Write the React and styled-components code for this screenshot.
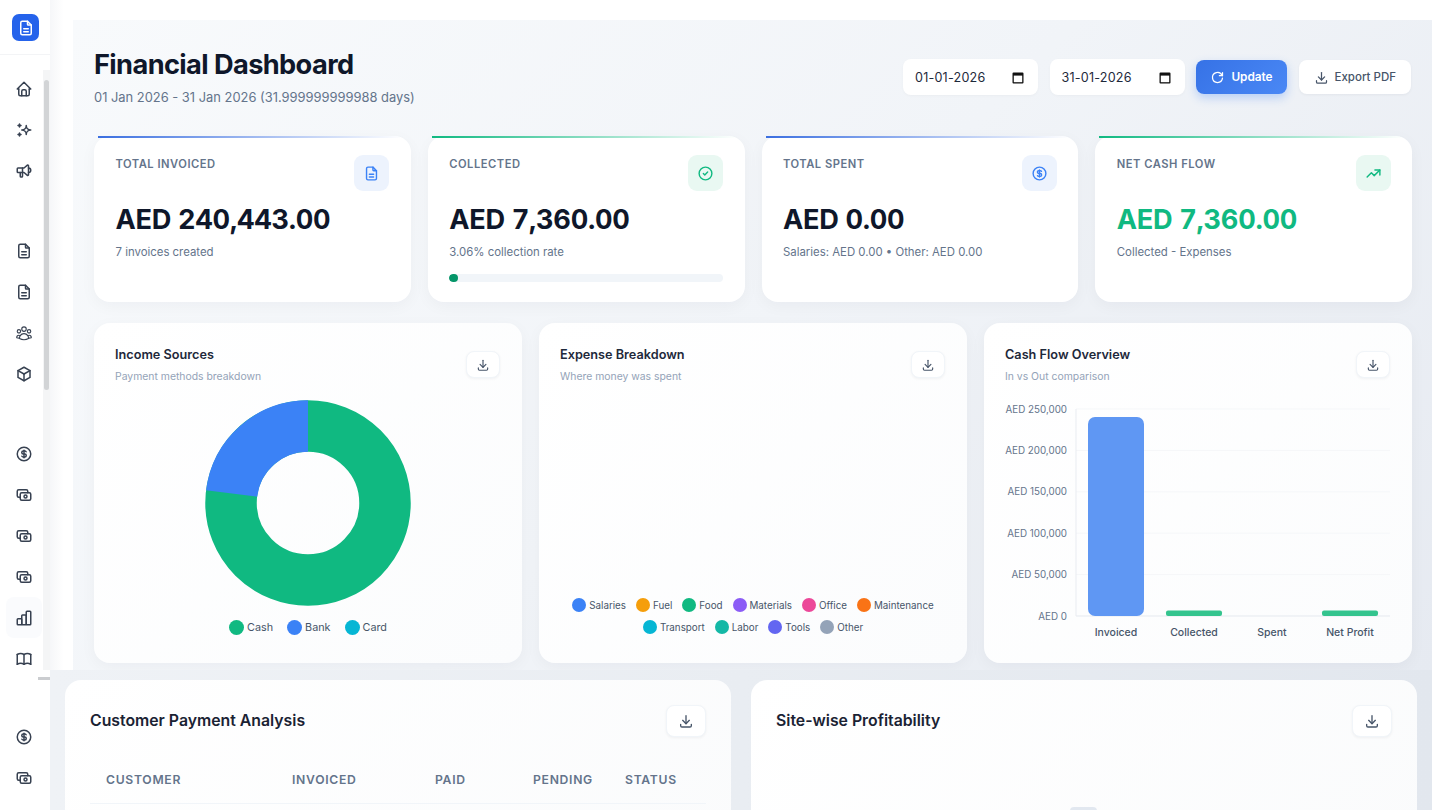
import React from 'react'
import styled, { createGlobalStyle } from 'styled-components'
import {
  TbHome,
  TbSparkles,
  TbSpeakerphone,
  TbFileDescription,
  TbBox,
  TbCoin,
  TbCash,
  TbBook,
  TbDownload,
  TbReload,
  TbCircleCheck,
  TbTrendingUp,
} from 'react-icons/tb'
import { HiOutlineUserGroup } from 'react-icons/hi2'

const GlobalStyle = createGlobalStyle`
  * { box-sizing: border-box; }
  html, body { margin: 0; height: 810px; overflow: hidden; background: #fff; }
  body { font-family: Inter, "Liberation Sans", sans-serif; color: #0f172a; }
`

const Page = styled.div`
  display: flex;
  width: 1440px;
  height: 810px;
`

const Sidebar = styled.aside`
  position: relative;
  width: 50px;
  flex: none;
  height: 810px;
  overflow: hidden;
  background: #fff;
`

const Brand = styled.div`
  height: 55px;
  padding: 14px 0 0 12px;
  border-bottom: 1px solid #f3f4f6;
`

const Logo = styled.div`
  width: 27px;
  height: 27px;
  border-radius: 7px;
  background: #2563eb;
  color: #fff;
  display: flex;
  align-items: center;
  justify-content: center;
`

const NavGroup = styled.div`
  display: flex;
  flex-direction: column;
  padding-top: ${(p) => p.$top}px;
`

const NavItem = styled.div`
  width: 36px;
  height: 41px;
  margin-left: 6px;
  display: flex;
  align-items: center;
  justify-content: center;
  color: #374151;
  border-radius: 8px;
  background: ${(p) => (p.$active ? '#fafbfd' : 'transparent')};
  svg {
    transform: ${(p) => (p.$flip ? 'scaleX(-1)' : 'none')};
  }
`

const ScrollTrack = styled.div`
  position: absolute;
  top: 70px;
  right: 0;
  width: 7px;
  height: 600px;
  background: #f4f5f6;
`

const ScrollThumb = styled.div`
  width: 5px;
  height: 310px;
  margin: 10px 0 0 1px;
  border-radius: 3px;
  background: #d2d4d6;
`

const ScrollEnd = styled.div`
  position: absolute;
  top: 677px;
  right: 0;
  width: 12px;
  height: 3px;
  background: #cbcdd0;
`

const Main = styled.main`
  flex: 1;
  display: flex;
  flex-direction: column;
  min-width: 0;
`

const TopArea = styled.div`
  padding: 20px 8px 0 23px;
  background: linear-gradient(90deg, #f6f7f9 0, #ffffff 60%, #ffffff 100%);
  background-size: 23px 100%;
  background-repeat: no-repeat;
`

const Panel = styled.section`
  height: 650px;
  padding: 0 20px 0 21px;
  background: linear-gradient(135deg, #f8fafc 0%, #f1f4f8 50%, #e6eaf1 100%);
`

const Header = styled.header`
  height: 116px;
  padding-top: 28px;
  display: flex;
  justify-content: space-between;
`

const Title = styled.h1`
  margin: 0;
  font-size: 27.2px;
  line-height: 34px;
  font-weight: 700;
  letter-spacing: -0.6px;
  color: #0f172a;
`

const Subtitle = styled.p`
  margin: 7px 0 0;
  font-size: 12.9px;
  line-height: 18px;
  color: #64748b;
`

const Actions = styled.div`
  display: flex;
  align-items: flex-start;
  gap: 11.5px;
  padding: 11px 1px 0 0;
`

const DateField = styled.div`
  width: 135px;
  height: 36px;
  padding: 0 14px 0 12px;
  display: flex;
  align-items: center;
  justify-content: space-between;
  background: #fff;
  border-radius: 8px;
  font-size: 12.6px;
  letter-spacing: 0.2px;
  color: #1e293b;
  box-shadow: 0 1px 3px rgba(15, 23, 42, 0.03);
`

const ActionButton = styled.button`
  height: 34px;
  margin-top: 1px;
  padding: 0;
  border: 0;
  border-radius: 8px;
  display: flex;
  align-items: center;
  justify-content: center;
  gap: 6px;
  width: ${(p) => p.$width}px;
  font-family: inherit;
  font-size: ${(p) => (p.$primary ? 11.8 : 11.5)}px;
  font-weight: ${(p) => (p.$primary ? 600 : 500)};
  color: ${(p) => (p.$primary ? '#fff' : '#475569')};
  background: ${(p) => (p.$primary ? 'linear-gradient(135deg, #3672e6, #4a88f5)' : '#fff')};
  box-shadow: ${(p) => (p.$primary ? '0 4px 10px rgba(59, 130, 246, 0.3)' : '0 1px 3px rgba(15, 23, 42, 0.05)')};
`

const KpiRow = styled.div`
  display: grid;
  grid-template-columns: repeat(4, 1fr);
  gap: 17px;
`

const KpiCard = styled.div`
  position: relative;
  height: 166px;
  padding: 19px 21.5px;
  border-radius: 16px;
  background: #fff;
  box-shadow: 0 4px 16px rgba(15, 23, 42, 0.04);
  &::before {
    content: '';
    position: absolute;
    top: 0;
    left: 4px;
    right: 8px;
    height: 2px;
    background: linear-gradient(90deg, ${(p) => p.$accent}, transparent);
  }
`

const KpiTop = styled.div`
  display: flex;
  justify-content: space-between;
  align-items: flex-start;
  height: 36px;
`

const KpiLabel = styled.div`
  margin-top: 1px;
  font-size: 11.2px;
  line-height: 16px;
  font-weight: 600;
  letter-spacing: 0.5px;
  text-transform: uppercase;
  color: #64748b;
`

const KpiIcon = styled.div`
  width: 35px;
  height: 36px;
  border-radius: 9px;
  display: flex;
  align-items: center;
  justify-content: center;
  color: ${(p) => p.$color};
  background: ${(p) => p.$bg};
`

const KpiValue = styled.div`
  margin-top: 12px;
  font-size: 27.2px;
  line-height: 34px;
  font-weight: 700;
  letter-spacing: -0.3px;
  font-variant-numeric: tabular-nums;
  color: ${(p) => p.$color || '#0f172a'};
`

const KpiNote = styled.div`
  margin-top: 7px;
  font-size: 11.4px;
  line-height: 16px;
  color: #64748b;
`

const Progress = styled.div`
  height: 8px;
  margin-top: 14px;
  border-radius: 4px;
  background: #f1f5f9;
  overflow: hidden;
`

const ProgressFill = styled.div`
  height: 100%;
  border-radius: 4px;
  background: #059669;
`

const ChartRow = styled.div`
  margin-top: 21px;
  display: grid;
  grid-template-columns: repeat(3, 1fr);
  gap: 17px;
`

const ChartCard = styled.div`
  height: 340px;
  padding: 24px 21px 28px;
  display: flex;
  flex-direction: column;
  border-radius: 16px;
  background: linear-gradient(135deg, #ffffff, #fbfcfd);
  box-shadow: 0 4px 16px rgba(15, 23, 42, 0.04);
`

const CardHead = styled.div`
  display: flex;
  justify-content: space-between;
  align-items: flex-start;
`

const ChartTitle = styled.div`
  font-size: 12.7px;
  line-height: 16px;
  font-weight: 600;
  color: #1e293b;
`

const ChartSub = styled.div`
  margin-top: 6px;
  font-size: 10.4px;
  line-height: 16px;
  color: #94a3b8;
`

const IconButton = styled.button`
  width: ${(p) => (p.$large ? 40 : 34)}px;
  height: ${(p) => (p.$large ? 32 : 27)}px;
  margin-top: ${(p) => (p.$large ? 0 : 4)}px;
  margin-right: ${(p) => (p.$large ? 0 : 1)}px;
  padding: 0;
  border: 1px solid #f1f5f9;
  border-radius: 8px;
  background: #fff;
  color: #475569;
  display: flex;
  align-items: center;
  justify-content: center;
  box-shadow: 0 1px 3px rgba(15, 23, 42, 0.05);
`

const ChartBody = styled.div`
  flex: 1;
  padding-top: 2px;
  display: flex;
  align-items: center;
  justify-content: center;
`

const Legend = styled.div`
  display: flex;
  flex-wrap: wrap;
  justify-content: center;
  gap: 6px ${(p) => (p.$big ? 14 : 10)}px;
`

const LegendItem = styled.div`
  display: flex;
  align-items: center;
  gap: 3px;
  height: 16px;
  font-size: ${(p) => (p.$big ? 10.8 : 9.8)}px;
  color: #475569;
`

const Dot = styled.span`
  width: ${(p) => (p.$big ? 15 : 14)}px;
  height: ${(p) => (p.$big ? 15 : 14)}px;
  border-radius: 50%;
  background: ${(p) => p.$color};
`

const BottomArea = styled.div`
  flex: 1;
  min-height: 0;
  margin-right: 8px;
  padding: 10px 15px 0;
  display: grid;
  grid-template-columns: repeat(2, 1fr);
  gap: 20px;
  background: linear-gradient(90deg, #eff2f6, #e9edf2 50%, #e2e7ee);
  overflow: hidden;
`

const WideCard = styled.div`
  height: 200px;
  padding: 25px 25px 0;
  border-radius: 16px 16px 0 0;
  background: linear-gradient(135deg, #ffffff, #fafbfc);
`

const WideTitle = styled.div`
  font-size: 15.8px;
  line-height: 31px;
  font-weight: 600;
  color: #1a2233;
`

const Table = styled.div`
  margin-top: 19px;
  padding: 0 16px;
  height: 48px;
  display: grid;
  grid-template-columns: 186px 143px 98px 92px 1fr;
  align-items: center;
  border-bottom: 1px solid #f1f5f9;
`

const Th = styled.div`
  font-size: 12.2px;
  font-weight: 600;
  letter-spacing: 0.7px;
  text-transform: uppercase;
  color: #64748b;
`

const BarPeek = styled.div`
  width: 27px;
  height: 4px;
  margin: 70px 0 0 294px;
  border-radius: 4px 4px 0 0;
  background: #e2e8f0;
`

// three flush bars rising left to right, the tabler set only has the middle-tallest one now
const StepBars = ({ size }) => (
  <svg width={size} height={size} viewBox="0 0 24 24" fill="none" stroke="currentColor" strokeWidth="2" strokeLinejoin="round" strokeLinecap="round">
    <rect x="3" y="13" width="6" height="8" rx="1" />
    <rect x="9" y="8" width="6" height="13" rx="1" />
    <rect x="15" y="3" width="6" height="18" rx="1" />
  </svg>
)

const navGroups = [
  { top: 13, items: [{ Icon: TbHome }, { Icon: TbSparkles, flip: true }, { Icon: TbSpeakerphone }] },
  { top: 39, items: [{ Icon: TbFileDescription }, { Icon: TbFileDescription }, { Icon: HiOutlineUserGroup }, { Icon: TbBox }] },
  { top: 39, items: [{ Icon: TbCoin }, { Icon: TbCash }, { Icon: TbCash }, { Icon: TbCash }, { Icon: StepBars, active: true }, { Icon: TbBook }] },
  { top: 37, items: [{ Icon: TbCoin }, { Icon: TbCash }] },
]

const kpis = [
  { label: 'Total Invoiced', value: 'AED 240,443.00', note: '7 invoices created', Icon: TbFileDescription, accent: '#3b6fe0', color: '#3b82f6', bg: '#edf3fd' },
  { label: 'Collected', value: 'AED 7,360.00', note: '3.06% collection rate', Icon: TbCircleCheck, accent: '#10b981', color: '#10b981', bg: '#e9f8f2', progress: 3.06 },
  { label: 'Total Spent', value: 'AED 0.00', note: 'Salaries: AED 0.00 • Other: AED 0.00', Icon: TbCoin, accent: '#3b6fe0', color: '#3b82f6', bg: '#edf3fd' },
  { label: 'Net Cash Flow', value: 'AED 7,360.00', note: 'Collected - Expenses', Icon: TbTrendingUp, accent: '#10b981', color: '#10b981', bg: '#e9f8f2', valueColor: '#10b981' },
]

const incomeLegend = [
  ['Cash', '#10b981'],
  ['Bank', '#3b82f6'],
  ['Card', '#06b6d4'],
]

const expenseLegend = [
  ['Salaries', '#3b82f6'],
  ['Fuel', '#f59e0b'],
  ['Food', '#10b981'],
  ['Materials', '#8b5cf6'],
  ['Office', '#ec4899'],
  ['Maintenance', '#f97316'],
  ['Transport', '#06b6d4'],
  ['Labor', '#14b8a6'],
  ['Tools', '#6366f1'],
  ['Other', '#94a3b8'],
]

const CalendarGlyph = () => (
  <svg width="12" height="13" viewBox="0 0 12 13">
    <path d="M1.5 1.5h9a1 1 0 0 1 1 1v9a1 1 0 0 1-1 1h-9a1 1 0 0 1-1-1v-9a1 1 0 0 1 1-1z" fill="#111" />
    <rect x="1.8" y="4.6" width="8.4" height="6.6" fill="#fff" />
  </svg>
)

const Donut = () => (
  <svg width="206" height="206" viewBox="0 0 206 206">
    <circle cx="103" cy="103" r="77" fill="none" stroke="#10b981" strokeWidth="51.5" />
    <path d="M103 26 A77 77 0 0 0 26.6 93.5" fill="none" stroke="#3b82f6" strokeWidth="51.5" />
  </svg>
)

const yTicks = ['AED 250,000', 'AED 200,000', 'AED 150,000', 'AED 100,000', 'AED 50,000', 'AED 0']
const xBars = [
  { label: 'Invoiced', x: 83, h: 199, color: '#5f97f3', r: 7 },
  { label: 'Collected', x: 161, h: 5.5, color: '#34c48e', r: 2 },
  { label: 'Spent', x: 239, h: 0, color: '#34c48e', r: 0 },
  { label: 'Net Profit', x: 317, h: 5.5, color: '#34c48e', r: 2 },
]

// chart area runs from y=9 (250k) down to y=216 (0)
const BarChart = () => (
  <svg width="386" height="240" viewBox="0 0 386 240" style={{ marginTop: 15, flex: 'none' }}>
    {yTicks.map((t, i) => {
      const y = 9 + i * 41.4
      return (
        <g key={t}>
          <line x1="71" x2="385" y1={y} y2={y} stroke={i === 5 ? '#e5e9ef' : '#f5f7f9'} />
          <text x="62" y={y + 3.5} textAnchor="end" fontSize="9.8" fill="#64748b" fontFamily="Inter">{t}</text>
        </g>
      )
    })}
    <line x1="71" x2="71" y1="9" y2="216" stroke="#e9ecf1" />
    {xBars.map((b) => (
      <g key={b.label}>
        {b.h > 0 && <rect x={b.x} y={216 - b.h} width="56" height={b.h} rx={b.r} fill={b.color} />}
        <text x={b.x + 28} y="236" textAnchor="middle" fontSize="10.5" fontWeight="500" fill="#475569" fontFamily="Inter">{b.label}</text>
      </g>
    ))}
  </svg>
)

const App = () => {
  return (
    <Page>
      <GlobalStyle />
      <Sidebar>
        <Brand>
          <Logo><TbFileDescription size={18} /></Logo>
        </Brand>
        {navGroups.map((g, i) => (
          <NavGroup key={i} $top={g.top}>
            {g.items.map(({ Icon, active, flip }, j) => (
              <NavItem key={j} $active={active} $flip={flip}>
                <Icon size={18} />
              </NavItem>
            ))}
          </NavGroup>
        ))}
        <ScrollTrack><ScrollThumb /></ScrollTrack>
        <ScrollEnd />
      </Sidebar>

      <Main>
        <TopArea>
          <Panel>
            <Header>
              <div>
                <Title>Financial Dashboard</Title>
                <Subtitle>01 Jan 2026 - 31 Jan 2026 (31.999999999988 days)</Subtitle>
              </div>
              <Actions>
                <DateField>01-01-2026 <CalendarGlyph /></DateField>
                <DateField>31-01-2026 <CalendarGlyph /></DateField>
                <ActionButton $primary $width={91}><TbReload size={15} />Update</ActionButton>
                <ActionButton $width={112.5}><TbDownload size={15} />Export PDF</ActionButton>
              </Actions>
            </Header>

            <KpiRow>
              {kpis.map((k) => (
                <KpiCard key={k.label} $accent={k.accent}>
                  <KpiTop>
                    <KpiLabel>{k.label}</KpiLabel>
                    <KpiIcon $color={k.color} $bg={k.bg}><k.Icon size={17} /></KpiIcon>
                  </KpiTop>
                  <KpiValue $color={k.valueColor}>{k.value}</KpiValue>
                  <KpiNote>{k.note}</KpiNote>
                  {k.progress && (
                    <Progress><ProgressFill style={{ width: `${k.progress}%` }} /></Progress>
                  )}
                </KpiCard>
              ))}
            </KpiRow>

            <ChartRow>
              <ChartCard>
                <CardHead>
                  <div>
                    <ChartTitle>Income Sources</ChartTitle>
                    <ChartSub>Payment methods breakdown</ChartSub>
                  </div>
                  <IconButton><TbDownload size={14} /></IconButton>
                </CardHead>
                <ChartBody><Donut /></ChartBody>
                <Legend $big>
                  {incomeLegend.map(([name, color]) => (
                    <LegendItem key={name} $big><Dot $big $color={color} />{name}</LegendItem>
                  ))}
                </Legend>
              </ChartCard>

              <ChartCard>
                <CardHead>
                  <div>
                    <ChartTitle>Expense Breakdown</ChartTitle>
                    <ChartSub>Where money was spent</ChartSub>
                  </div>
                  <IconButton><TbDownload size={14} /></IconButton>
                </CardHead>
                <ChartBody />
                <Legend>
                  {expenseLegend.map(([name, color]) => (
                    <LegendItem key={name}><Dot $color={color} />{name}</LegendItem>
                  ))}
                </Legend>
              </ChartCard>

              <ChartCard>
                <CardHead>
                  <div>
                    <ChartTitle>Cash Flow Overview</ChartTitle>
                    <ChartSub>In vs Out comparison</ChartSub>
                  </div>
                  <IconButton><TbDownload size={14} /></IconButton>
                </CardHead>
                <BarChart />
              </ChartCard>
            </ChartRow>
          </Panel>
        </TopArea>

        <BottomArea>
          <WideCard>
            <CardHead>
              <WideTitle>Customer Payment Analysis</WideTitle>
              <IconButton $large><TbDownload size={16} /></IconButton>
            </CardHead>
            <Table>
              <Th>Customer</Th>
              <Th>Invoiced</Th>
              <Th>Paid</Th>
              <Th>Pending</Th>
              <Th>Status</Th>
            </Table>
          </WideCard>
          <WideCard>
            <CardHead>
              <WideTitle>Site-wise Profitability</WideTitle>
              <IconButton $large><TbDownload size={16} /></IconButton>
            </CardHead>
            <BarPeek />
          </WideCard>
        </BottomArea>
      </Main>
    </Page>
  )
}

export default App
